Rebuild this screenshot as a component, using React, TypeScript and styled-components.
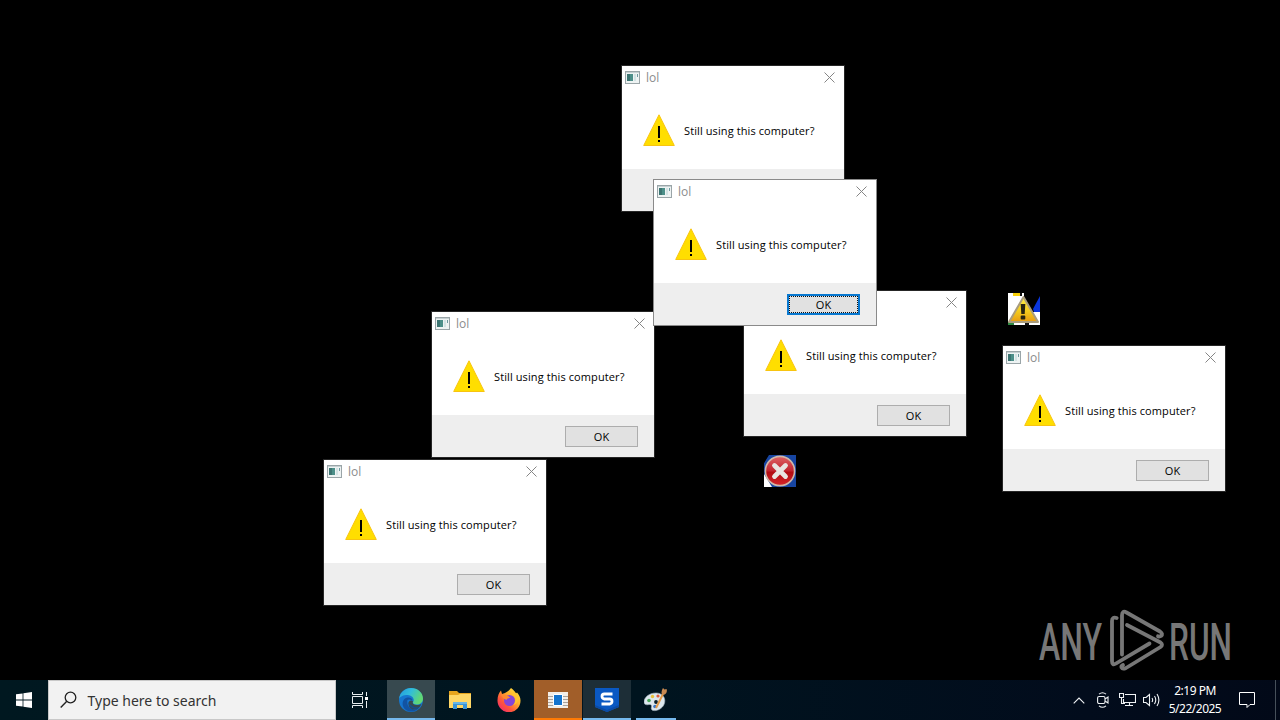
import styled, { createGlobalStyle, css } from "styled-components";

type DialogData = {
  id: string;
  x: number;
  y: number;
  active?: boolean;
};

const dialogs: DialogData[] = [
  { id: "top", x: 621, y: 65 },
  { id: "bottom-left", x: 323, y: 459 },
  { id: "left", x: 431, y: 311 },
  { id: "center", x: 743, y: 290 },
  { id: "right", x: 1002, y: 345 },
  { id: "active", x: 653, y: 179, active: true },
];

export default function App() {
  return (
    <>
      <GlobalStyle />
      <Screen>
        <Desktop>
          {dialogs.map((dialog) => (
            <MessageDialog key={dialog.id} {...dialog} />
          ))}
          <Floating $x={1008} $y={293}>
            <StrayWarning />
          </Floating>
          <Floating $x={764} $y={455}>
            <StrayError />
          </Floating>
          <Floating $x={1030} $y={605}>
            <Watermark />
          </Floating>
        </Desktop>
        <Taskbar />
      </Screen>
    </>
  );
}

function MessageDialog({ x, y, active = false }: DialogData) {
  return (
    <Window $x={x} $y={y} $active={active}>
      <TitleBar>
        <AppIcon />
        <Title>lol</Title>
        <CloseButton aria-label="Close">
          <svg width="11" height="11" viewBox="0 0 11 11">
            <path d="M.5.5l10 10M10.5.5l-10 10" stroke="#858585" />
          </svg>
        </CloseButton>
      </TitleBar>
      <Body>
        <WarningIcon />
        <Message>Still using this computer?</Message>
      </Body>
      <Footer>
        <OkButton $active={active}>OK</OkButton>
      </Footer>
    </Window>
  );
}

function AppIcon() {
  return (
    <svg width="15" height="13" viewBox="0 0 15 13">
      <rect x=".5" y=".5" width="14" height="12" fill="#eef3f3" stroke="#9aa5a8" />
      <path d="M1 1.5h13" stroke="#c6d0d2" />
      <rect x="2" y="3" width="6" height="7" fill="#4c8f89" />
      <rect x="2" y="3" width="3" height="7" fill="#3c7572" />
      <rect x="9" y="3" width="2" height="7" fill="#d3e3e4" />
      <rect x="12" y="3" width="1" height="3" fill="#6f9aa0" />
    </svg>
  );
}

function WarningIcon() {
  return (
    <svg width="32" height="32" viewBox="0 0 32 32">
      <path d="M16 .8L31.3 31.5H.7z" fill="#ffde00" stroke="#f8c410" />
      <path d="M15 12h2v12h-2zM15 26h2v2h-2z" fill="#000" />
    </svg>
  );
}

function StrayWarning() {
  return (
    <svg width="32" height="32" viewBox="0 0 32 32">
      <defs>
        <linearGradient id="stray-warning" x1="0" y1="0" x2="0" y2="1">
          <stop offset="0" stopColor="#fff04a" />
          <stop offset=".6" stopColor="#f3c81c" />
          <stop offset="1" stopColor="#e79b12" />
        </linearGradient>
      </defs>
      <path d="M0 0h16v32H0z" fill="#fff" />
      <path d="M16 0h16v20H16z" fill="#000" />
      <path d="M25 19h7v13h-7z" fill="#fff" />
      <path d="M5 0h9v3H5z" fill="#f7cf08" />
      <path d="M12 0h2v3h-2z" fill="#111" />
      <path d="M32 3v16h-6l-1-3z" fill="#0a36dc" />
      <path d="M0 29h6v3H0z" fill="#2e8a43" />
      <path d="M6 30h11v2H6zM21 30h5v2h-5z" fill="#fff" />
      <path d="M17 30h4v2h-4z" fill="#111" />
      <path
        d="M15.5 4L30 29H1z"
        fill="url(#stray-warning)"
        stroke="#a99c7d"
        strokeWidth="2"
        strokeLinejoin="round"
      />
      <path d="M12.7 11h4.600l-.6 10h-3.400z" fill="#292511" />
      <rect x="12.700" y="22.500" width="4.600" height="4" rx="1" fill="#292511" />
    </svg>
  );
}

function StrayError() {
  return (
    <svg width="32" height="32" viewBox="0 0 32 32">
      <defs>
        <linearGradient id="stray-error" x1="0" y1="0" x2="0" y2="1">
          <stop offset="0" stopColor="#df6264" />
          <stop offset=".48" stopColor="#c22631" />
          <stop offset=".55" stopColor="#b20c12" />
          <stop offset="1" stopColor="#d5252a" />
        </linearGradient>
      </defs>
      <path d="M4 0h28v32H0V8z" fill="#1745a1" />
      <path d="M0 19l8 13H0z" fill="#fff" />
      <path d="M0 0h5L0 8z" fill="#000" />
      <circle
        cx="16"
        cy="16"
        r="14.6"
        fill="url(#stray-error)"
        stroke="#d0b8a8"
        strokeWidth="1.6"
      />
      <path
        d="M10.5 10.5l11 11M21.5 10.5l-11 11"
        stroke="#e9e4e1"
        strokeWidth="4.8"
        strokeLinecap="round"
      />
    </svg>
  );
}

function Watermark() {
  return (
    <WatermarkArt width="220" height="72" viewBox="0 0 220 72">
      <text x="9" y="54.5" textLength="63" lengthAdjust="spacingAndGlyphs">
        ANY
      </text>
      <text x="139" y="54.5" textLength="63" lengthAdjust="spacingAndGlyphs">
        RUN
      </text>
      <path d="M86.700 13Q82 11.500 82 16v40q0 5 4 2.500L119.500 38.500" />
      <path d="M92 49.500V10.500q0-5.500 4.500-3L130 26.500q3.500 2.500 1 4.500-1.200.8-3 .3" />
      <path d="M97 20L130.500 37.500q3 2.200 0 4.500L96 63q-3.500 1.500-4.500-.5-.5-1.500 1.500-2.500" />
    </WatermarkArt>
  );
}

function Taskbar() {
  return (
    <Bar>
      <BarButton aria-label="Start">
        <svg width="16" height="16" viewBox="0 0 16 16" fill="#fff">
          <path d="M0 2.300L6.600 1.400v6.200H0zM7.400 1.300L16 0v7.600H7.400zM0 8.400h6.600v6.200L0 13.700zM7.400 8.400H16V16l-8.600-1.300z" />
        </svg>
      </BarButton>
      <Search>
        <svg width="18" height="18" viewBox="0 0 18 18" fill="none" stroke="#222">
          <circle cx="10.500" cy="6.500" r="5.300" strokeWidth="1.300" />
          <path d="M6.800 10.300L.7 16.500" strokeWidth="1.400" />
        </svg>
        <SearchText>Type here to search</SearchText>
      </Search>
      <BarButton aria-label="Task View">
        <svg width="16" height="16" viewBox="0 0 16 16" fill="none" stroke="#e8eef0">
          <path d="M.5 0v2.500h10V0M.5 16v-2.500h10V16M.5 4.500h10v7H.5zM14.500 0v4M14.500 9v7" />
          <path d="M13 5h3v3h-3z" fill="#fff" stroke="none" />
        </svg>
      </BarButton>
      <Apps>
        <AppButton $bg="#37494f" $line="#76b9ed">
          <EdgeIcon />
        </AppButton>
        <AppButton>
          <FolderIcon />
        </AppButton>
        <AppButton>
          <FirefoxIcon />
        </AppButton>
        <AppButton $bg="#a15e29" $line="#ff7a05">
          <svg width="20" height="16" viewBox="0 0 20 16">
            <path d="M0 0h20v16H0z" fill="#f3ede6" />
            <path d="M0 4.500h20M0 7.500h20M0 10.500h20M0 13.500h20" stroke="#a8a29c" />
            <path d="M5.500 2.500h9v11h-9z" fill="#1474ce" stroke="#fff" />
          </svg>
        </AppButton>
        <AppButton $bg="#1d2e37" $line="#76b9ed">
          <svg width="24" height="24" viewBox="0 0 24 24">
            <path d="M0 0h24v19l-12 5-12-5z" fill="#0a58c2" />
            <path d="M0 17l12 5 12-5v2l-12 5-12-5z" fill="#0c4ba4" />
            <path
              d="M17.500 6H9.300Q7 6 7 8.300T9.300 11h5.400Q17 11 17 13.300T14.700 16H6.500"
              fill="none"
              stroke="#fff"
              strokeWidth="2.800"
            />
          </svg>
        </AppButton>
        <AppButton $line="#76b9ed" $inset>
          <PaintIcon />
        </AppButton>
      </Apps>
      <Tray>
        <TrayIcon>
          <svg width="12" height="7" viewBox="0 0 12 7">
            <path d="M.7 6.300L6 1l5.300 5.300" />
          </svg>
        </TrayIcon>
        <TrayIcon>
          <svg width="12" height="16" viewBox="0 0 12 16">
            <path d="M2 2.200Q5.500-.8 9 2.200M2 13.800q3.500 3 7 0" />
            <rect x=".6" y="4.500" width="7.400" height="7" rx="1.500" />
            <path d="M8 7l3-2v6L8 9" />
          </svg>
        </TrayIcon>
        <TrayIcon>
          <svg width="17" height="14" viewBox="0 0 17 14">
            <path d="M.5.5h4v4h-4zM2.500 4.500v6H6M6 1.500h10.500v8H4.500V6M10.500 9.500v3M6 12.500h8" />
          </svg>
        </TrayIcon>
        <TrayIcon>
          <svg width="17" height="14" viewBox="0 0 17 14">
            <path d="M.5 4.500H3L6.500 1.500v11L3 9.500H.5zM9 5q1.300 2 0 4M11.500 3q2.500 4 0 8M14 1q3.800 6 0 12" />
          </svg>
        </TrayIcon>
        <Clock>
          <span>2:19 PM</span>
          <span>5/22/2025</span>
        </Clock>
        <Notifications aria-label="Notifications">
          <svg width="16" height="16" viewBox="0 0 16 16" fill="none" stroke="#fff">
            <path d="M.5.5h15v12h-4.500L8 15.500V12.500H.5z" />
          </svg>
        </Notifications>
      </Tray>
    </Bar>
  );
}

function EdgeIcon() {
  return (
    <svg width="24" height="24" viewBox="0 0 24 24">
      <defs>
        <linearGradient id="edge-top" x1="0" y1="0" x2="1" y2=".4">
          <stop offset="0" stopColor="#2399dd" />
          <stop offset=".5" stopColor="#31bddb" />
          <stop offset="1" stopColor="#61d873" />
        </linearGradient>
      </defs>
      <circle cx="12" cy="12" r="12" fill="#1676cf" />
      <path
        d="M0 11C1 4 6 0 12 0c7 0 12 5 12 10.500 0 4-3 6-6.500 6-3 0-4.200-1.200-3.200-2.800C16 11 13 7 8.500 7 4.500 7 1 8.500 0 11z"
        fill="url(#edge-top)"
      />
      <path
        d="M8.500 12C7 18 12 23 19 21c-5 4.500-13 3-15-3-1.300-4 1-8 4.500-8.500 2.500-.3 5 1 5 3-2-1-4-1.500-5-.5z"
        fill="#1253a2"
      />
      <path
        d="M14 13.200c-1.200 2 1 3.800 4 3.800 2 0 3.500-.5 4.500-1.300-1 2.500-2.500 4.300-4 5.300-6 2-9.500-2-9-6 .2-2 2.500-3.500 4.500-1.800z"
        fill="#37494f"
      />
      <path d="M9.500 14c0 4.500 4 7.500 9 6.800l2-1.800C16 20 11 18 9.500 14z" fill="#174d8d" />
    </svg>
  );
}

function FolderIcon() {
  return (
    <svg width="22" height="18" viewBox="0 0 22 18">
      <path d="M0 0h8l2 2h12v4H0z" fill="#e7a51d" />
      <path d="M0 4h9l2-1h11v14H0z" fill="#ffd766" />
      <path d="M4 18v-7h14v7h-4v-4H8v4z" fill="#3994d8" />
      <path d="M4 11h14v2H4z" fill="#66b4e5" />
    </svg>
  );
}

function FirefoxIcon() {
  return (
    <svg width="24" height="24" viewBox="0 0 24 24">
      <defs>
        <linearGradient id="fox" x1="1" y1="0" x2=".1" y2="1">
          <stop offset="0" stopColor="#fff044" />
          <stop offset=".4" stopColor="#ffb12c" />
          <stop offset=".7" stopColor="#ff563b" />
          <stop offset="1" stopColor="#f02275" />
        </linearGradient>
      </defs>
      <path
        d="M14 0c3 2 4 4 4.500 6L20 4.500c2 2 3.500 5 3.500 8A11.500 11.500 0 01.5 13C.4 8 2 4.500 4 2.500L5 6l3-1c1-.4 4-2 6-5z"
        fill="url(#fox)"
      />
      <circle cx="12.500" cy="12.500" r="5.500" fill="#8445d8" />
      <path d="M4 7c3-1 7 0 9.500 3-2 0-3.500.5-4 2-2-.8-4-2.500-5.500-5z" fill="#ff8b32" />
      <path d="M15 6c4 2 5 8 1 11 5-1 7-7 4-11l-3-3z" fill="#ffc52e" />
    </svg>
  );
}

function PaintIcon() {
  return (
    <svg width="24" height="24" viewBox="0 0 24 24">
      <path
        d="M12 5C5 5 0 9.500 0 14c0 3 3 3 5 2.500 2-.4 3 .8 2.500 2.500C6.500 22 9 23 12 22.500c5-.8 9-5 8.800-10C20.700 8 17 5 12 5z"
        fill="#dde7ed"
        stroke="#a3b3bf"
        strokeWidth=".6"
      />
      <circle cx="5" cy="12.500" r="1.800" fill="#4aa75b" />
      <circle cx="8.500" cy="8.500" r="1.700" fill="#e7c13b" />
      <circle cx="14" cy="8" r="1.600" fill="#dd5c3d" />
      <circle cx="11" cy="18.500" r="1.800" fill="#3a77c8" />
      <circle cx="12" cy="14" r="1.900" fill="#0b2029" />
      <path d="M12 20L19 6" stroke="#e39a48" strokeWidth="2" />
      <path d="M17.500 5.500c0-2 .5-4 1.500-5.500l1.500 1.500L22.500 1c1 2 0 5-3 6z" fill="#c88951" />
    </svg>
  );
}

const GlobalStyle = createGlobalStyle`
  * {
    box-sizing: border-box;
  }

  body {
    margin: 0;
    background: #000;
    overflow: hidden;
    font-family: "Noto Sans", "Open Sans", sans-serif;
  }

  button {
    padding: 0;
    border: 0;
    background: none;
    font: inherit;
  }

  svg {
    display: block;
    flex-shrink: 0;
  }
`;

const Screen = styled.main`
  width: 1280px;
  height: 720px;
  display: flex;
  flex-direction: column;
  background: #000;
`;

const Desktop = styled.section`
  position: relative;
  flex: 1;
`;

const Floating = styled.div<{ $x: number; $y: number }>`
  position: absolute;
  left: ${({ $x }) => $x}px;
  top: ${({ $y }) => $y}px;
`;

const Window = styled(Floating)<{ $active: boolean }>`
  width: 224px;
  height: 147px;
  display: flex;
  flex-direction: column;
  border: 1px solid ${({ $active }) => ($active ? "#8a8a8a" : "#262626")};
  background: #fff;
`;

const TitleBar = styled.header`
  display: flex;
  align-items: center;
  height: 23px;
  padding: 0 9px 0 3px;
`;

const Title = styled.span`
  flex: 1;
  margin-left: 6px;
  color: #8c8c8c;
  font-family: "Open Sans", sans-serif;
  font-size: 12px;
  line-height: 22px;
`;

const CloseButton = styled.button`
  display: flex;
`;

const Body = styled.div`
  flex: 1;
  display: flex;
  align-items: flex-start;
  padding: 25px 0 0 21px;
`;

const Message = styled.p`
  margin: 9px 0 0 9px;
  color: #000;
  font-family: "Open Sans", sans-serif;
  font-size: 11px;
  line-height: 16px;
  letter-spacing: 0.1px;
  white-space: nowrap;
`;

const Footer = styled.footer`
  display: flex;
  align-items: center;
  justify-content: flex-end;
  height: 42px;
  padding-right: 16px;
  background: #eee;
`;

const OkButton = styled.button<{ $active: boolean }>`
  width: 73px;
  height: 21px;
  border: 1px solid #adadad;
  background: #e1e1e1;
  color: #000;
  font-family: "Open Sans", sans-serif;
  font-size: 11px;
  line-height: 17px;

  ${({ $active }) =>
    $active &&
    css`
      border: 2px solid #0878d0;
      outline: 1px dotted #111;
      outline-offset: -3px;
      line-height: 15px;
    `}
`;

const WatermarkArt = styled.svg`
  overflow: visible;
  fill: none;
  stroke: #777;
  stroke-width: 3.8;
  stroke-linecap: round;
  stroke-linejoin: round;

  text {
    fill: #777;
    stroke: none;
    font-family: Roboto, sans-serif;
    font-size: 52px;
    font-weight: 500;
  }
`;

const Bar = styled.nav`
  display: flex;
  height: 40px;
  background: linear-gradient(90deg, #001820, #00141f 50%, #020c1c 85%, #020918);
`;

const BarButton = styled.button`
  width: 48px;
  height: 40px;
  display: flex;
  align-items: center;
  justify-content: center;
`;

const Search = styled.div`
  display: flex;
  align-items: center;
  width: 288px;
  padding-left: 11px;
  border: 1px solid #c8c8c8;
  background: #f2f2f2;
`;

const SearchText = styled.span`
  margin-left: 9.5px;
  color: #333;
  font-size: 14px;
  white-space: nowrap;
`;

const Apps = styled.div`
  display: flex;
  gap: 1px;
  margin-left: 3px;
`;

const AppButton = styled(BarButton)<{
  $bg?: string;
  $line?: string;
  $inset?: boolean;
}>`
  background: ${({ $bg, $line, $inset }) => `
    linear-gradient(${$line ?? "transparent"}, ${$line ?? "transparent"})
      center bottom / ${$inset ? 40 : 48}px 2px no-repeat,
    ${$bg ?? "transparent"}
  `};
`;

const Tray = styled.div`
  display: flex;
  align-items: center;
  margin-left: auto;
  padding-right: 4px;
`;

const TrayIcon = styled.span`
  display: flex;
  align-items: center;
  justify-content: center;
  width: 24px;
  height: 40px;

  svg {
    fill: none;
    stroke: #f0f3f5;
    stroke-width: 1.1;
  }
`;

const Clock = styled.time`
  display: flex;
  flex-direction: column;
  align-items: center;
  width: 64px;
  color: #fff;
  font-size: 12px;
  line-height: 18px;
  letter-spacing: -0.5px;
`;

const Notifications = styled(BarButton)`
  width: 49px;
  padding-right: 8px;
  border-right: 1px solid #46505a;
`;
